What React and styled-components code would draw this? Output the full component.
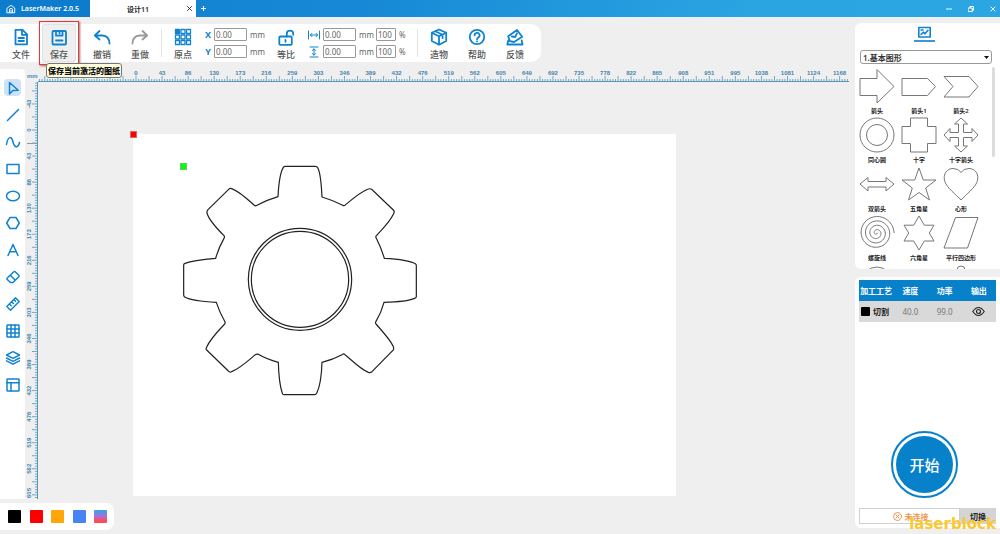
import React, { useEffect, useRef, useState } from "react";
import styled, { createGlobalStyle } from "styled-components";

const BLUE = "#0f83cf";

const GlobalStyle = createGlobalStyle`
  * {
    box-sizing: border-box;
  }
  body {
    margin: 0;
    background: #efefef;
    font-family: "Noto Sans", "Noto Sans CJK SC", sans-serif;
    font-size: 8px;
    color: #222;
  }
  button, input, select {
    font: inherit;
    color: inherit;
    margin: 0;
    padding: 0;
  }
  button {
    border: 0;
    background: none;
    cursor: pointer;
  }
`;

const Page = styled.div`
  height: 100vh;
  display: flex;
  flex-direction: column;
  overflow: hidden;
`;

const Body = styled.div`
  flex: 1;
  min-height: 0;
  display: flex;
`;

const Svg = styled.svg`
  display: block;
  flex: none;
  width: ${(p) => p.$size}px;
  height: ${(p) => p.$size}px;
  fill: none;
  stroke: currentColor;
  stroke-width: ${(p) => p.$stroke};
  stroke-linejoin: round;
  stroke-linecap: round;
`;

const Icon = ({ size = 20, box = 20, stroke = 1.8, children }) => (
  <Svg $size={size} $stroke={stroke} viewBox={`0 0 ${box} ${box}`} aria-hidden="true">
    {children}
  </Svg>
);

/* title bar */

const TitleBar = styled.header`
  flex: none;
  height: 17px;
  display: flex;
  align-items: stretch;
  color: #fff;
  font-size: 7px;
  background: linear-gradient(100deg, #0f80d0 0%, #1688d5 35%, #2ba4e2 75%, #2ca6e3 100%);
`;

const HomeTab = styled.a`
  width: 90px;
  padding-left: 6px;
  display: flex;
  align-items: center;
  gap: 5px;
  font-weight: 600;
  color: #fff;
  text-decoration: none;
  background: #0e7ccc;
`;

const FileTab = styled.div`
  width: 106px;
  display: flex;
  align-items: center;
  background: #fff;
  color: #222;
  font-weight: 600;
`;

const TabName = styled.span`
  flex: 1;
  padding-left: 4px;
  text-align: center;
`;

const TabClose = styled.button`
  width: 14px;
  display: flex;
  justify-content: center;
`;

const AddTab = styled.button`
  width: 14px;
  display: flex;
  align-items: center;
  justify-content: center;
`;

const WindowButtons = styled.div`
  margin-left: auto;
  display: flex;
  gap: 8px;
  padding-right: 0;
`;

const WindowButton = styled.button`
  width: 14px;
  display: flex;
  align-items: center;
  justify-content: center;
`;

/* toolbar */

const Workspace = styled.main`
  flex: 1;
  min-width: 0;
  display: flex;
  flex-direction: column;
  padding: 7px 0 4px;
`;

const Toolbar = styled.div`
  flex: none;
  align-self: flex-start;
  display: flex;
  align-items: center;
  gap: 4px;
  padding: 0 9px 0 4px;
  background: #fff;
  border-radius: 0 10px 10px 0;
`;

const ToolButton = styled.button`
  width: 34px;
  height: 38px;
  padding-top: 3px;
  display: flex;
  flex-direction: column;
  align-items: center;
  border-radius: 3px;
  color: ${(p) => (p.$muted ? "#999" : BLUE)};
  background: ${(p) => (p.$active ? "#efefef" : "none")};
  box-shadow: ${(p) => (p.$active ? "inset 0 0 0 1px #e2e2e2" : "none")};
`;

const ToolLabel = styled.span`
  font-size: 9px;
  line-height: 15px;
  font-weight: 500;
  color: #555;
`;

const SaveSlot = styled.div`
  position: relative;
  margin-right: 5px;
`;

const Frame = styled.div`
  position: absolute;
  inset: -3px;
  border: 1px solid #e23a3a;
  box-shadow: 1px 1px 2px rgba(90, 20, 20, 0.6);
  pointer-events: none;
`;

const Tooltip = styled.div`
  position: absolute;
  z-index: 2;
  top: 39px;
  left: 4px;
  padding: 0 1px;
  white-space: nowrap;
  font-size: 8px;
  line-height: 13px;
  font-weight: 900;
  color: #111;
  background: #ffffdc;
  border: 1px solid #777;
  border-radius: 3px;
`;

const Divider = styled.div`
  width: 1px;
  height: 28px;
  background: #e4e4e4;
`;

const Fields = styled.div`
  display: flex;
  flex-direction: column;
  gap: 4px;
`;

const Field = styled.div`
  height: 13px;
  display: flex;
  align-items: center;
  color: #666;
`;

const FieldName = styled.label`
  width: ${(p) => p.$width}px;
  padding-right: 2px;
  display: flex;
  justify-content: center;
  font-size: 9px;
  font-weight: 700;
  color: ${BLUE};
`;

const NumberInput = styled.input`
  width: ${(p) => p.$width}px;
  height: 13px;
  padding: 0 1px;
  border: 1px solid #999;
  border-radius: 1px;
  background: #fff;
  color: #666;
`;

const Unit = styled.span`
  width: ${(p) => p.$width}px;
  padding-left: 3px;
`;

/* drawing area */

const Editor = styled.div`
  flex: 1;
  min-height: 0;
  margin: 7px 6px 4px 0;
  display: flex;
`;

const ToolColumn = styled.nav`
  flex: none;
  width: 25px;
  padding: 10px 4px;
  display: flex;
  flex-direction: column;
  gap: 10px;
  background: #fff;
  border-radius: 0 4px 0 0;
`;

const DrawButton = styled.button`
  height: 17px;
  display: flex;
  align-items: center;
  justify-content: center;
  border-radius: 4px;
  color: ${BLUE};
  background: ${(p) => (p.$active ? "#cfe2f5" : "none")};
`;

const Board = styled.div`
  flex: 1;
  min-width: 0;
  display: grid;
  grid-template: 13px minmax(0, 1fr) / 13px minmax(0, 1fr);
`;

const Corner = styled.div`
  padding-left: 2px;
  font: 700 6px/14px "Liberation Sans", sans-serif;
  color: #4b8fb5;
`;

const RulerBox = styled.div`
  min-width: 0;
  min-height: 0;
  overflow: hidden;
`;

const RulerSvg = styled.svg`
  display: block;
  width: 100%;
  height: 100%;
  color: #5596bb;
  text {
    font: 700 6px "Liberation Sans", sans-serif;
    fill: #4585ab;
    text-anchor: middle;
  }
`;

const Surface = styled.div`
  position: relative;
  overflow: hidden;
`;

const Sheet = styled.div`
  position: absolute;
  left: 95px;
  top: 52px;
  width: 543px;
  height: 362px;
  background: #fff;
`;

const Marker = styled.div`
  position: absolute;
  left: ${(p) => p.$x}px;
  top: ${(p) => p.$y}px;
  width: 7px;
  height: 7px;
  border: 1px solid ${(p) => p.$edge};
  background: ${(p) => p.$color};
`;

const Drawing = styled.svg`
  position: absolute;
  left: 47px;
  top: 29px;
  width: 240px;
  height: 235px;
  fill: none;
  stroke: #222;
  stroke-width: 3.6;
`;

const ColorBar = styled.div`
  flex: none;
  align-self: flex-start;
  width: 114px;
  height: 27px;
  padding: 0 7px 0 8px;
  display: flex;
  align-items: center;
  justify-content: space-between;
  background: #fff;
  border-radius: 0 8px 8px 0;
`;

const Swatch = styled.button`
  width: 13px;
  height: 13px;
  border-radius: 1px;
  background: ${(p) => p.$color};
`;

/* right side */

const Sidebar = styled.aside`
  flex: none;
  width: 145px;
  padding: 6px 0;
  display: flex;
  flex-direction: column;
  gap: 8px;
`;

const Panel = styled.section`
  background: #fff;
  border-radius: 6px 0 0 6px;
  display: flex;
  flex-direction: column;
`;

const ShapePanel = styled(Panel)`
  flex: none;
  height: 246px;
  overflow: hidden;
`;

const LibraryTab = styled.button`
  align-self: center;
  flex: none;
  width: 21px;
  height: 16px;
  margin: 3px 6px 0 0;
  display: flex;
  justify-content: center;
  color: ${BLUE};
  border-bottom: 2px solid #3b97d6;
`;

const SelectWrap = styled.div`
  position: relative;
  flex: none;
  height: 14px;
  margin: 8px 8px 3px 5px;
`;

const Select = styled.select`
  appearance: none;
  width: 100%;
  height: 14px;
  padding-left: 2px;
  border: 1px solid #999;
  border-radius: 3px;
  background: #fff;
  font-weight: 600;
  color: #333;
`;

const Caret = styled.svg`
  position: absolute;
  right: 3px;
  top: 6px;
  width: 5px;
  height: 3px;
  pointer-events: none;
`;

const ShapeArea = styled.div`
  flex: 1;
  min-height: 0;
  padding-right: 5px;
  display: flex;
  overflow: hidden;
`;

const ShapeGrid = styled.div`
  flex: 1;
  padding: 1px 10px 0 1px;
  display: grid;
  grid-template-columns: repeat(3, 1fr);
  grid-auto-rows: 49px;
  align-content: start;
`;

const ShapeButton = styled.button`
  display: flex;
  flex-direction: column;
  align-items: center;
  font-size: 6px;
  line-height: 14px;
  font-weight: 600;
  color: #222;
`;

const ShapeIcon = styled.svg`
  flex: none;
  width: 36px;
  height: 36px;
  fill: none;
  stroke: #777;
  stroke-width: 1;
`;

const Scrollbar = styled.div`
  width: 3px;
  height: 90px;
  border-radius: 2px;
  background: #dcdcdc;
`;

const JobPanel = styled(Panel)`
  flex: 1;
  padding: 3px 4px 4px;
`;

const LayerTable = styled.table`
  width: 100%;
  border-collapse: collapse;
  table-layout: fixed;
  text-align: center;
  th, td {
    height: 21px;
    padding: 0;
  }
  th {
    background: #0881cb;
    color: #fff;
    font-weight: 600;
  }
  td {
    background: #d9d9d9;
    color: #777;
  }
`;

const LayerName = styled.div`
  display: flex;
  align-items: center;
  gap: 3px;
  padding-left: 2px;
  font-weight: 600;
  color: #222;
`;

const LayerColor = styled.i`
  width: 9px;
  height: 9px;
  border-radius: 1px;
  background: #000;
`;

const EyeButton = styled.button`
  display: block;
  margin: 0 auto;
  color: #222;
`;

const StartButton = styled.button`
  align-self: center;
  flex: none;
  width: 67px;
  height: 67px;
  margin: auto 6px 10px 0;
  padding: 3px;
  border: 2px solid #0881cb;
  border-radius: 50%;
  background: #0881cb content-box;
  background-clip: content-box;
  color: #fff;
  font-size: 15px;
  font-weight: 500;
`;

const Connection = styled.div`
  position: relative;
  height: 16px;
  display: flex;
`;

const Status = styled.div`
  flex: 1;
  padding-left: 2px;
  display: flex;
  align-items: center;
  justify-content: center;
  gap: 3px;
  border: 1px solid #d0d0d0;
  font-weight: 500;
  color: #ee8a3c;
`;

const SwitchButton = styled.button`
  width: 36px;
  background: #d4d4d4;
  color: #222;
  font-weight: 600;
`;

const Watermark = styled.span`
  position: absolute;
  right: 0;
  top: 7px;
  font: 700 15px/18px "DejaVu Sans", sans-serif;
  color: #fbc92f;
  pointer-events: none;
`;

const STEP = 26.06;

// labels every 43.245 mm, ten ticks between two labels
const Ruler = ({ origin, labelFrom, vertical }) => {
  const box = useRef(null);
  const [length, setLength] = useState(0);

  useEffect(() => {
    const observer = new ResizeObserver(([entry]) => {
      const { width, height } = entry.contentRect;
      setLength(vertical ? height : width);
    });
    observer.observe(box.current);
    return () => observer.disconnect();
  }, [vertical]);

  const ticks = [];
  const labels = [];
  for (let i = -40; origin + (i * STEP) / 10 < length; i++) {
    const at = origin + (i * STEP) / 10;
    if (at < 0) continue;
    const start = i % 5 === 0 ? 7 : 10;
    ticks.push(vertical ? `M${start} ${at}H13` : `M${at} ${start}V13`);
    if (i % 10 === 0 && i / 10 >= labelFrom) {
      labels.push({ at, text: Math.round((i / 10) * 43.245) });
    }
  }

  return (
    <RulerBox ref={box}>
      <RulerSvg aria-hidden="true">
        <path d={ticks.join("")} stroke="currentColor" strokeWidth="0.8" fill="none" />
        {vertical ? (
          <>
            <path d={`M12.5 0V${length}`} stroke="currentColor" />
            <path d="M2 61.5H12" stroke="#999" />
          </>
        ) : (
          <path d={`M0 12.5H${length}`} stroke="currentColor" />
        )}
        {labels.map((l) =>
          vertical ? (
            <text key={l.at} transform={`translate(6 ${Math.min(l.at, length - 6)}) rotate(-90)`}>{l.text}</text>
          ) : (
            <text key={l.at} x={l.at} y="6">{l.text}</text>
          )
        )}
      </RulerSvg>
    </RulerBox>
  );
};

const spiral = (() => {
  const points = [];
  for (let a = 0; a <= 360 * 4; a += 10) {
    const r = (a / 360) * 4.4;
    const t = (a * Math.PI) / 180;
    points.push(`${(17.5 + r * Math.cos(t)).toFixed(2)},${(18 + r * Math.sin(t)).toFixed(2)}`);
  }
  return points.join(" ");
})();

const icons = {
  file: <><path d="M4.5 2.8h7l4.5 4.5v10h-11.5z" /><path d="M11 3v4.800h5M7.500 11h5.500M7.500 14h5.500" /></>,
  save: <><rect x="3.500" y="4" width="13.500" height="13.500" rx="1" /><path d="M7 4.500v4.200h6.500v-4.200M10.500 5v1.500M7 13.500h6.500" /></>,
  undo: <path d="M7.500 4L2.800 8.500l4.700 4M3 8.500h7.500q6.700.5 7 8" />,
  redo: <path d="M12.500 4l4.700 4.500-4.700 4M17 8.500H9.500q-6.700.5-7 8" />,
  origin: (
    <>
      {[2.5, 8, 13.5].map((y) =>
        [2.5, 8, 13.5].map((x) => (
          <rect key={`${x}-${y}`} x={x} y={y} width="4" height="4" fill={x + y === 5 ? "currentColor" : "none"} />
        ))
      )}
    </>
  ),
  lock: <><rect x="3.300" y="9.500" width="12.500" height="8.300" rx="1" /><path d="M10.800 9.500V6.800a3.200 3.200 0 0 1 6.400 0v1M9.500 13v1.800" /></>,
  cube: <path d="M10 2.500l7.200 3.300v8.200L10 17.800 2.800 14V5.800zM2.800 5.800L10 9.300l7.200-3.500M10 9.300v8.500M6.300 4.200l7.300 3.500v3.300" />,
  help: <><circle cx="10" cy="10" r="7.200" /><path d="M7.600 8.300a2.500 2.500 0 1 1 3.700 2.200q-1.300.7-1.300 1.800M10 14.300v.1" /></>,
  feedback: <><path d="M3.200 9.300L12 3l5.200 6.700-8.200 5.300-4.200-.9z" /><path d="M6.800 9.500l3.500.5 1.700-3.800M3.300 13.300l-1 4.200h15.200l-.8-4" /></>,
};

const drawTools = [
  ["选择", <path d="M4.500 2.500v11.500l3.300-3.500 5.400-.3z" />],
  ["直线", <path d="M2.500 13.500l11-11" />],
  ["曲线", <path d="M1.500 10.500C3 1.500 6.500 2 8 8s5 6.500 6.500.5" />],
  ["矩形", <rect x="2" y="3.500" width="12" height="9" />],
  ["椭圆", <ellipse cx="8" cy="8" rx="6.500" ry="4.700" />],
  ["多边形", <path d="M5 2.500h6L14.300 8 11 13.500H5L1.700 8z" />],
  ["文字", <path d="M3 13.500L8 2.500l5 11M4.800 9.700h6.400" />],
  ["橡皮擦", <path d="M2 9.300l6.800-6.500a1 1 0 0 1 1.400 0l3.600 3.500a1 1 0 0 1 0 1.400L8 13.500H5.500L2 10.200zM5.300 6.200l5 5" />],
  ["测量", <path d="M1.800 10.500l8.700-8.700 3.700 3.700-8.700 8.700zM4.500 8l1.700 1.700M6.700 5.800l1.700 1.700M9 3.500l1.500 1.700" />],
  ["阵列", <><rect x="2" y="2" width="12" height="12" rx="0.5" /><path d="M6 2v12M10 2v12M2 6h12M2 10h12" /></>],
  ["图层", <path d="M8 1.700L14.500 5 8 8.300 1.500 5zM1.500 8L8 11.300 14.500 8M1.500 10.800L8 14.200l6.500-3.400" />],
  ["版面", <><rect x="2" y="2" width="12" height="12" rx="0.5" /><path d="M2 5.700h12M6 5.700V14" /></>],
];

const shapes = [
  ["箭头", <path d="M1 10.500h17V1.500L35 18.500 18 35V27.500H1z" />],
  ["箭头1", <path d="M1 10.500h25.500l8 8-8 9H1z" />],
  ["箭头2", <path d="M1 8.500h25l9 10-9 10.500H1l9-10.500z" />],
  ["同心圆", <><circle cx="18" cy="18" r="17" /><circle cx="18" cy="18" r="10.500" /></>],
  ["十字", <path d="M9.500 1h17v8.500H35v17h-8.500V35h-17v-8.500H1v-17h8.500z" />],
  ["十字箭头", <path d="M18 1l6.500 6h-4v8.500H29v-4l6 6.500-6 6.500v-4h-8.500V29h4L18 35l-6.500-6h4v-8.500H7v4L1 18l6-6.500v4h8.500V7h-4z" />],
  ["双箭头", <path d="M1 18l8-6.500v4h18v-4L35 18l-8 7v-4H9v4z" />],
  ["五角星", <path d="M18 2l4.300 12H35l-10.300 8 3.800 12L18 26.500 7.500 34l3.800-12L1 14h12.700z" />],
  ["心形", <path d="M18 34C13 28.500 4 22 1.800 15.500-.5 8 4 2.500 10 2.500q5.500 0 8 4 2.500-4 8-4c6 0 10.500 5.500 8.200 13C32 22 23 28.500 18 34z" />],
  ["螺旋线", <polyline points={spiral} />],
  ["六角星", <path d="M18 1l5.300 9.200H33L28.300 18 33 26h-9.700L18 35l-5.300-9H3l4.700-8L3 10.200h9.700z" />],
  ["平行四边形", <path d="M12.500 2.500H35l-10.500 30.500H1z" />],
  ["圆形", <circle cx="18" cy="18" r="15" />],
  ["", null],
  ["水滴", <path d="M14 6a4 4 0 0 1 8 0l6 14a10 10 0 1 1-20 0z" />],
];

const GEAR =
  "M474 230C476 190 482 155 490 142Q492 139 496 139H586Q591 139 593 143C600 155 604 190 606 231Q640 241 668 256Q672 259 677 254C705 230 725 214 745 207Q750 205 755 208L820 270Q825 275 820 283C810 305 790 325 769 347Q766 351 769 355Q784 385 793 415C830 417 870 422 886 431Q889 433 889 437V530Q889 533 884 535C865 543 830 546 792 547Q785 575 768 604Q765 608 768 612C785 632 812 660 820 680Q822 686 820 690L756 755Q751 759 745 757C720 747 695 720 675 704Q671 700 666 704Q640 718 606 727C605 760 600 800 590 820Q588 824 584 824H492Q488 824 487 820C480 800 476 765 475 727Q440 718 415 703Q410 701 406 704C385 722 360 745 335 755Q329 758 325 753L260 690Q257 687 259 683C268 662 292 635 314 612Q317 608 314 604Q298 575 289 547C250 545 210 540 194 531Q191 528 191 525V435Q191 431 195 430C215 422 250 418 287 415Q295 385 312 355Q315 351 312 347C290 325 265 295 261 279Q260 273 264 269L326 208Q330 204 335 206C355 213 380 235 402 255Q406 259 411 256Q440 240 474 230Z";

const Tool = ({ icon, label, muted, active, stroke }) => (
  <ToolButton type="button" $muted={muted} $active={active}>
    <Icon stroke={stroke}>{icons[icon]}</Icon>
    <ToolLabel>{label}</ToolLabel>
  </ToolButton>
);

const App = () => {
  return (
    <Page>
      <GlobalStyle />
      <TitleBar>
        <HomeTab href="#home">
          <Icon size={10} box={16} stroke={1.5}>
            <path d="M2 6.500L8 2l6 4.500V14H2zM5.500 14V9.500a2.500 2.500 0 0 1 5 0V14M8 10v4" />
          </Icon>
          LaserMaker 2.0.5
        </HomeTab>
        <FileTab>
          <TabName>设计11</TabName>
          <TabClose type="button" aria-label="关闭">
            <Icon size={5} box={10} stroke={1.8}><path d="M1 1l8 8M9 1L1 9" /></Icon>
          </TabClose>
        </FileTab>
        <AddTab type="button" aria-label="新建">
          <Icon size={5} box={10} stroke={2.2}><path d="M5 1v8M1 5h8" /></Icon>
        </AddTab>
        <WindowButtons>
          <WindowButton type="button" aria-label="最小化">
            <Icon size={6} box={12} stroke={2}><path d="M1 6h10" /></Icon>
          </WindowButton>
          <WindowButton type="button" aria-label="还原">
            <Icon size={6} box={12} stroke={2}><path d="M1 4h7.500v7H1zM4 3.500V1h7v7.500H9" /></Icon>
          </WindowButton>
          <WindowButton type="button" aria-label="退出">
            <Icon size={6} box={12} stroke={2}><path d="M2 2l8 8M10 2l-8 8" /></Icon>
          </WindowButton>
        </WindowButtons>
      </TitleBar>

      <Body>
        <Workspace>
          <Toolbar>
            <Tool icon="file" label="文件" />
            <SaveSlot>
              <Tool icon="save" label="保存" active />
              <Frame />
              <Tooltip role="tooltip">保存当前激活的图纸</Tooltip>
            </SaveSlot>
            <Tool icon="undo" label="撤销" />
            <Tool icon="redo" label="重做" muted />
            <Divider />
            <Tool icon="origin" label="原点" stroke={1.3} />
            <Fields>
              <Field>
                <FieldName $width={10} htmlFor="pos-x">X</FieldName>
                <NumberInput $width={33} id="pos-x" defaultValue="0.00" />
                <Unit $width={18}>mm</Unit>
              </Field>
              <Field>
                <FieldName $width={10} htmlFor="pos-y">Y</FieldName>
                <NumberInput $width={33} id="pos-y" defaultValue="0.00" />
                <Unit $width={18}>mm</Unit>
              </Field>
            </Fields>
            <Tool icon="lock" label="等比" />
            <Fields>
              <Field>
                <FieldName $width={16} htmlFor="size-w" aria-label="宽度">
                  <Icon size={12} box={12} stroke={1}><path d="M.5 2v8M11.500 2v8M2.500 6h7M4 4.300L2.300 6 4 7.700M8 4.300L9.700 6 8 7.700" /></Icon>
                </FieldName>
                <NumberInput $width={33} id="size-w" defaultValue="0.00" />
                <Unit $width={20}>mm</Unit>
                <NumberInput $width={20} aria-label="宽度百分比" defaultValue="100" />
                <Unit $width={17}>%</Unit>
              </Field>
              <Field>
                <FieldName $width={16} htmlFor="size-h" aria-label="高度">
                  <Icon size={12} box={12} stroke={1}><path d="M2 1h8M2 11h8M6 3v6M4.300 4.500L6 2.800l1.700 1.700M4.300 7.500L6 9.200l1.700-1.700" /></Icon>
                </FieldName>
                <NumberInput $width={33} id="size-h" defaultValue="0.00" />
                <Unit $width={20}>mm</Unit>
                <NumberInput $width={20} aria-label="高度百分比" defaultValue="100" />
                <Unit $width={17}>%</Unit>
              </Field>
            </Fields>
            <Divider />
            <Tool icon="cube" label="造物" />
            <Tool icon="help" label="帮助" />
            <Tool icon="feedback" label="反馈" />
          </Toolbar>

          <Editor>
            <ToolColumn>
              {drawTools.map(([name, art], i) => (
                <DrawButton key={name} type="button" aria-label={name} $active={i === 0}>
                  <Icon size={16} box={16} stroke={1.5}>{art}</Icon>
                </DrawButton>
              ))}
            </ToolColumn>
            <Board>
              <Corner>mm</Corner>
              <Ruler origin={98} labelFrom={0} />
              <Ruler origin={48} labelFrom={-1} vertical />
              <Surface>
                <Sheet>
                  <Drawing viewBox="180 129 720 705">
                    <path d={GEAR} />
                    <ellipse cx="540" cy="478" rx="155" ry="153" />
                    <ellipse cx="540" cy="478" rx="146" ry="144" />
                  </Drawing>
                  <Marker $x={-3} $y={-3} $color="#f00" $edge="#d66" />
                  <Marker $x={47} $y={29} $color="#0f0" $edge="#6c6" />
                </Sheet>
              </Surface>
            </Board>
          </Editor>

          <ColorBar>
            <Swatch type="button" aria-label="黑色" $color="#000" />
            <Swatch type="button" aria-label="红色" $color="#f00" />
            <Swatch type="button" aria-label="橙色" $color="#ffa60d" />
            <Swatch type="button" aria-label="蓝色" $color="#4683f3" />
            <Swatch type="button" aria-label="更多颜色" $color="linear-gradient(#2fa8e0, #a86fd8 50%, #ff4a5a 80%)" />
          </ColorBar>
        </Workspace>

        <Sidebar>
          <ShapePanel>
            <LibraryTab type="button" aria-label="图库">
              <Icon size={13} box={13} stroke={1.6}>
                <rect x="0.800" y="1.500" width="11.400" height="9.500" />
                <path d="M3 8.500l2.300-2.300 1.700 1.600 3-3.500M3 4h2" />
              </Icon>
            </LibraryTab>
            <SelectWrap>
              <Select aria-label="图形分类" defaultValue="1">
                <option value="1">1.基本图形</option>
              </Select>
              <Caret viewBox="0 0 5 3"><path d="M0 0h5L2.500 3z" fill="#111" /></Caret>
            </SelectWrap>
            <ShapeArea>
              <ShapeGrid>
                {shapes.map(([name, art], i) =>
                  art ? (
                    <ShapeButton key={i} type="button" aria-label={name}>
                      <ShapeIcon viewBox="0 0 36 36" aria-hidden="true">{art}</ShapeIcon>
                      {i < 12 && name}
                    </ShapeButton>
                  ) : (
                    <span key={i} />
                  )
                )}
              </ShapeGrid>
              <Scrollbar />
            </ShapeArea>
          </ShapePanel>

          <JobPanel>
            <LayerTable>
              <thead>
                <tr>
                  <th>加工工艺</th>
                  <th>速度</th>
                  <th>功率</th>
                  <th>输出</th>
                </tr>
              </thead>
              <tbody>
                <tr>
                  <td>
                    <LayerName><LayerColor />切割</LayerName>
                  </td>
                  <td>40.0</td>
                  <td>99.0</td>
                  <td>
                    <EyeButton type="button" aria-label="显示">
                      <Icon size={13} box={13} stroke={1.2}>
                        <path d="M.8 6.500Q3.500 2.500 6.500 2.500T12.200 6.500Q9.500 10.500 6.500 10.500T.8 6.500z" />
                        <circle cx="6.500" cy="6.500" r="2" />
                      </Icon>
                    </EyeButton>
                  </td>
                </tr>
              </tbody>
            </LayerTable>
            <StartButton type="button">开始</StartButton>
            <Connection>
              <Status>
                <Icon size={9} box={9} stroke={0.9}>
                  <circle cx="4.500" cy="4.500" r="4" />
                  <path d="M3 3l3 3M6 3L3 6" />
                </Icon>
                未连接
              </Status>
              <SwitchButton type="button">切换</SwitchButton>
              <Watermark>laserblock</Watermark>
            </Connection>
          </JobPanel>
        </Sidebar>
      </Body>
    </Page>
  );
};

export default App;
